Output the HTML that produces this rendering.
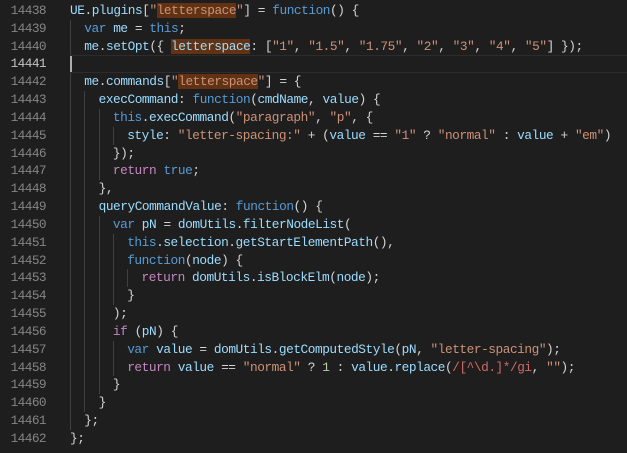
<!DOCTYPE html>
<html><head><meta charset="utf-8"><style>
html,body{margin:0;padding:0;background:#1e1e1e;width:627px;height:453px;overflow:hidden}
.ln{position:absolute;left:0;width:46px;text-align:right;color:#858585;font:12.8px/17.83px "Liberation Mono",monospace;letter-spacing:-0.6px}
.c{position:absolute;left:70px;white-space:pre;color:#d4d4d4;font:12.8px/17.83px "Liberation Mono",monospace;letter-spacing:-0.46px;height:17.83px}
i{display:inline-block;width:14.3px;height:17.83px;vertical-align:top;box-shadow:inset 1px 0 #404040;letter-spacing:0}
.v{color:#9cdcfe}.k{color:#569cd6}.s{color:#ce9178}.r{color:#c586c0}.n{color:#b5cea8}.x{color:#d16969}
.h{background:#613214}
</style></head><body>
<div style="position:absolute;left:70px;right:0;top:55px;height:16px;border-top:1px solid #2c2c2c;border-bottom:1px solid #2c2c2c"></div>
<div style="position:absolute;left:70px;top:56px;width:2px;height:16px;background:#aeafad"></div>
<div id="w"></div>
<script>
const L=[
'<span class=v>UE</span>.<span class=v>plugins</span>[<span class=s>"<span class=h>letterspace</span>"</span>] = <span class=k>function</span>() {',
'<i></i><span class=k>var</span> <span class=v>me</span> = <span class=k>this</span>;',
'<i></i><span class=v>me</span>.<span class=v>setOpt</span>({ <span class="v h">letterspace</span>: [<span class=s>"1"</span>, <span class=s>"1.5"</span>, <span class=s>"1.75"</span>, <span class=s>"2"</span>, <span class=s>"3"</span>, <span class=s>"4"</span>, <span class=s>"5"</span>] });',
'',
'<i></i><span class=v>me</span>.<span class=v>commands</span>[<span class=s>"<span class=h>letterspace</span>"</span>] = {',
'<i></i><i></i><span class=v>execCommand</span>: <span class=k>function</span>(<span class=v>cmdName</span>, <span class=v>value</span>) {',
'<i></i><i></i><i></i><span class=k>this</span>.<span class=v>execCommand</span>(<span class=s>"paragraph"</span>, <span class=s>"p"</span>, {',
'<i></i><i></i><i></i><i></i><span class=v>style</span>: <span class=s>"letter-spacing:"</span> + (<span class=v>value</span> == <span class=s>"1"</span> ? <span class=s>"normal"</span> : <span class=v>value</span> + <span class=s>"em"</span>)',
'<i></i><i></i><i></i>});',
'<i></i><i></i><i></i><span class=r>return</span> <span class=k>true</span>;',
'<i></i><i></i>},',
'<i></i><i></i><span class=v>queryCommandValue</span>: <span class=k>function</span>() {',
'<i></i><i></i><i></i><span class=k>var</span> <span class=v>pN</span> = <span class=v>domUtils</span>.<span class=v>filterNodeList</span>(',
'<i></i><i></i><i></i><i></i><span class=k>this</span>.<span class=v>selection</span>.<span class=v>getStartElementPath</span>(),',
'<i></i><i></i><i></i><i></i><span class=k>function</span>(<span class=v>node</span>) {',
'<i></i><i></i><i></i><i></i><i></i><span class=r>return</span> <span class=v>domUtils</span>.<span class=v>isBlockElm</span>(<span class=v>node</span>);',
'<i></i><i></i><i></i><i></i>}',
'<i></i><i></i><i></i>);',
'<i></i><i></i><i></i><span class=r>if</span> (<span class=v>pN</span>) {',
'<i></i><i></i><i></i><i></i><span class=k>var</span> <span class=v>value</span> = <span class=v>domUtils</span>.<span class=v>getComputedStyle</span>(<span class=v>pN</span>, <span class=s>"letter-spacing"</span>);',
'<i></i><i></i><i></i><i></i><span class=r>return</span> <span class=v>value</span> == <span class=s>"normal"</span> ? <span class=n>1</span> : <span class=v>value</span>.<span class=v>replace</span>(<span class=x>/[^\\d.]*/gi</span>, <span class=s>""</span>);',
'<i></i><i></i><i></i>}',
'<i></i><i></i>}',
'<i></i>};',
'};'];
let h='';
L.forEach((l,j)=>{const t=(2+j*17.83).toFixed(2);
h+=`<div class=ln style="top:${t}px;${j==3?'color:#c6c6c6':''}">${14438+j}</div><div class=c style="top:${t}px">${l}</div>`;});
document.getElementById('w').innerHTML=h;
</script>
</body></html>
